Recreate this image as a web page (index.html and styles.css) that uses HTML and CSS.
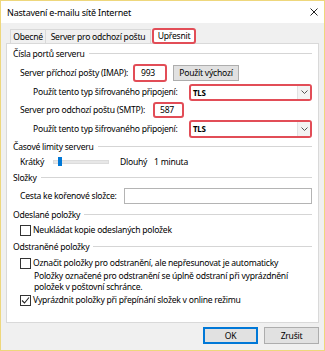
FILE: index.html
```html
<!DOCTYPE html>
<html lang="cs">
<head>
<meta charset="utf-8">
<link rel="stylesheet" href="styles.css">
</head>
<body>
<div class="window">
  <div class="titlebar">
    <span class="title">Nastavení e-mailu sítě Internet</span>
    <svg class="close" width="8" height="8" viewBox="0 0 8 8"><path d="M0.5 0.5L7.5 7.5M7.5 0.5L0.5 7.5" stroke="#222" stroke-width="1" fill="none"/></svg>
  </div>
  <div class="client">
    <div class="tabs">
      <div class="tab t1">Obecné</div>
      <div class="tab t2">Server pro odchozí poštu</div>
      <div class="tab t3 active">Upřesnit</div>
    </div>
    <div class="panel">
      <div class="group"><span class="gtext">Čísla portů serveru</span><span class="gline"></span></div>
      <div class="row r-imap">
        <span class="lbl w-imap">Server příchozí pošty (IMAP):</span>
        <span class="field hl w-993">993</span>
        <span class="btn btn-def">Použít výchozí</span>
      </div>
      <div class="row r-enc1 sub">
        <span class="lbl w-enc">Použít tento typ šifrovaného připojení:</span>
        <span class="combo hl c1"><span class="ctext">TLS</span><span class="carrow"><svg width="7" height="4" viewBox="0 0 7 4"><path d="M0.5 0.5L3.5 3.5L6.5 0.5" stroke="#555" fill="none"/></svg></span></span>
      </div>
      <div class="row r-smtp">
        <span class="lbl w-smtp">Server pro odchozí poštu (SMTP):</span>
        <span class="field hl w-587">587</span>
      </div>
      <div class="row r-enc2 sub">
        <span class="lbl w-enc">Použít tento typ šifrovaného připojení:</span>
        <span class="combo hl c2"><span class="ctext">TLS</span><span class="carrow"><svg width="7" height="4" viewBox="0 0 7 4"><path d="M0.5 0.5L3.5 3.5L6.5 0.5" stroke="#555" fill="none"/></svg></span></span>
      </div>
      <div class="group g2"><span class="gtext">Časové limity serveru</span><span class="gline"></span></div>
      <div class="row r-slider">
        <span class="lbl w-short">Krátký</span>
        <span class="track"><span class="thumb"></span></span>
        <span class="lbl w-long">Dlouhý</span>
        <span class="lbl">1 minuta</span>
      </div>
      <div class="group g3"><span class="gtext">Složky</span><span class="gline"></span></div>
      <div class="row r-path">
        <span class="lbl w-path">Cesta ke kořenové složce:</span>
        <span class="field grow"></span>
      </div>
      <div class="group g4"><span class="gtext">Odeslané položky</span><span class="gline"></span></div>
      <div class="row r-cb">
        <span class="cb"></span><span class="cbl">Neukládat kopie odeslaných položek</span>
      </div>
      <div class="group g5"><span class="gtext">Odstraněné položky</span><span class="gline"></span></div>
      <div class="row r-cb r-cb2">
        <span class="cb"></span><span class="cbl">Označit položky pro odstranění, ale nepřesunovat je automaticky</span>
      </div>
      <div class="desc">Položky označené pro odstranění se úplně odstraní při vyprázdnění<br>položek v poštovní schránce.</div>
      <div class="row r-cb">
        <span class="cb checked"><svg width="9" height="9" viewBox="0 0 9 9"><path d="M1 4.5L3.5 7L8 1.5" stroke="#222" stroke-width="1.1" fill="none"/></svg></span><span class="cbl">Vyprázdnit položky při přepínání složek v online režimu</span>
      </div>
    </div>
    <div class="buttons">
      <span class="btn dlg ok">OK</span>
      <span class="btn dlg">Zrušit</span>
    </div>
  </div>
</div>
</body>
</html>
```

FILE: styles.css
```css
* { box-sizing: border-box; }
html, body { margin: 0; padding: 0; }
body {
  font-family: "Noto Sans", "Open Sans", sans-serif;
  font-size: 8.6px;
  letter-spacing: -0.25px;
  color: #000;
  background: #fff;
}
.window {
  width: 325px;
  height: 351px;
  border: 1px solid #eed77c;
  display: flex;
  flex-direction: column;
  background: #f0f0f0;
}
.titlebar {
  height: 22px;
  flex: none;
  background: #fff;
  display: flex;
  align-items: center;
  justify-content: space-between;
  padding: 0 6px 0 6px;
}
.title { font-size: 9px; letter-spacing: -0.2px; }
.client {
  flex: 1;
  display: flex;
  flex-direction: column;
  padding: 4px 5px 0 5px;
}
.tabs {
  display: flex;
  align-items: flex-end;
  height: 16px;
  padding-left: 4px;
  position: relative;
  z-index: 1;
}
.tab {
  height: 14px;
  border: 1px solid #d9d9d9;
  border-bottom: none;
  background: #f0f0f0;
  display: flex;
  align-items: center;
  justify-content: center;
  white-space: nowrap;
}
.t1 { width: 36px; }
.t2 { width: 106px; margin-left: -1px; }
.t3 { width: 44px; margin-left: 1px; }
.tab.active {
  height: 16px;
  margin-bottom: -1px;
  background: #fff;
  border: 2px solid #e24d57;
  border-radius: 3px;
}
.panel {
  height: 280px;
  background: #fff;
  border: 1px solid #d9d9d9;
  padding: 2px 6px 0 6px;
  display: flex;
  flex-direction: column;
}
.group {
  height: 16px;
  display: flex;
  align-items: center;
  flex: none;
}
.gtext { white-space: nowrap; }
.gline {
  flex: 1;
  height: 2px;
  margin-left: 4px;
  border-top: 1px solid #d5d5d5;
  border-bottom: 1px solid #fff;
}
.g2 { margin-top: 1px; }
.g3 { margin-top: 1px; }
.g4 { margin-top: 3px; }
.g5 { margin-top: 2px; }
.row {
  display: flex;
  align-items: center;
  flex: none;
  padding-left: 7px;
}
.row.sub { padding-left: 20px; }
.lbl { white-space: nowrap; flex: none; }
.r-imap { margin-top: 1px; height: 19px; }
.r-enc1 { margin-top: 1px; height: 18px; }
.r-smtp { height: 17px; }
.r-enc2 { margin-top: 1px; height: 19px; }
.w-imap { width: 113px; }
.w-smtp { width: 133px; }
.w-enc { width: 156px; }
.w-path { width: 104px; }
.field {
  height: 16px;
  border: 1px solid #7a7a7a;
  background: #fff;
  display: flex;
  align-items: center;
  padding-left: 4px;
}
.field.hl, .combo.hl {
  border: 2px solid #e24d57;
  border-radius: 3px;
}
.w-993 { width: 34px; height: 18px; padding-left: 6px; }
.w-587 { width: 31px; height: 16px; padding-left: 5px; }
.grow { flex: 1; border-color: #b4b4b4; }
.btn {
  display: flex;
  align-items: center;
  justify-content: center;
  background: #e1e1e1;
  border: 1px solid #adadad;
  white-space: nowrap;
}
.btn-def { width: 66px; height: 16px; margin-left: 6px; }
.combo {
  display: flex;
  align-items: center;
  width: 123px;
  height: 17px;
  background: #fff;
}
.c2 { height: 18px; }
.ctext { flex: 1; padding-left: 2px; font-weight: bold; font-size: 8px; }
.carrow {
  width: 13px;
  align-self: stretch;
  background: #f3f3f3;
  border-left: 1px solid #e2e2e2;
  display: flex;
  align-items: center;
  justify-content: center;
}
.r-slider { height: 14px; }
.w-short { width: 33px; }
.track {
  width: 56px;
  height: 4px;
  background: #e7e7e7;
  border: 1px solid #dcdcdc;
  position: relative;
}
.thumb {
  position: absolute;
  left: 4px;
  top: -4px;
  width: 4px;
  height: 9px;
  background: #0078d7;
}
.w-long { width: 34px; margin-left: 11px; }
.r-path { margin-top: 1px; height: 17px; }
.r-cb { height: 14px; }
.r-cb2 { margin-top: 1px; }
.cb {
  width: 11px;
  height: 11px;
  border: 1px solid #333;
  background: #fff;
  flex: none;
  display: flex;
  align-items: center;
  justify-content: center;
}
.cbl { margin-left: 2px; white-space: nowrap; }
.desc {
  margin-top: 1px;
  padding-left: 21px;
  line-height: 11px;
  height: 22px;
  flex: none;
  white-space: nowrap;
}
.buttons {
  display: flex;
  justify-content: flex-end;
  gap: 6px;
  margin-top: 4px;
}
.dlg { width: 55px; height: 17px; }
.ok { border: 2px solid #0078d7; }
```
